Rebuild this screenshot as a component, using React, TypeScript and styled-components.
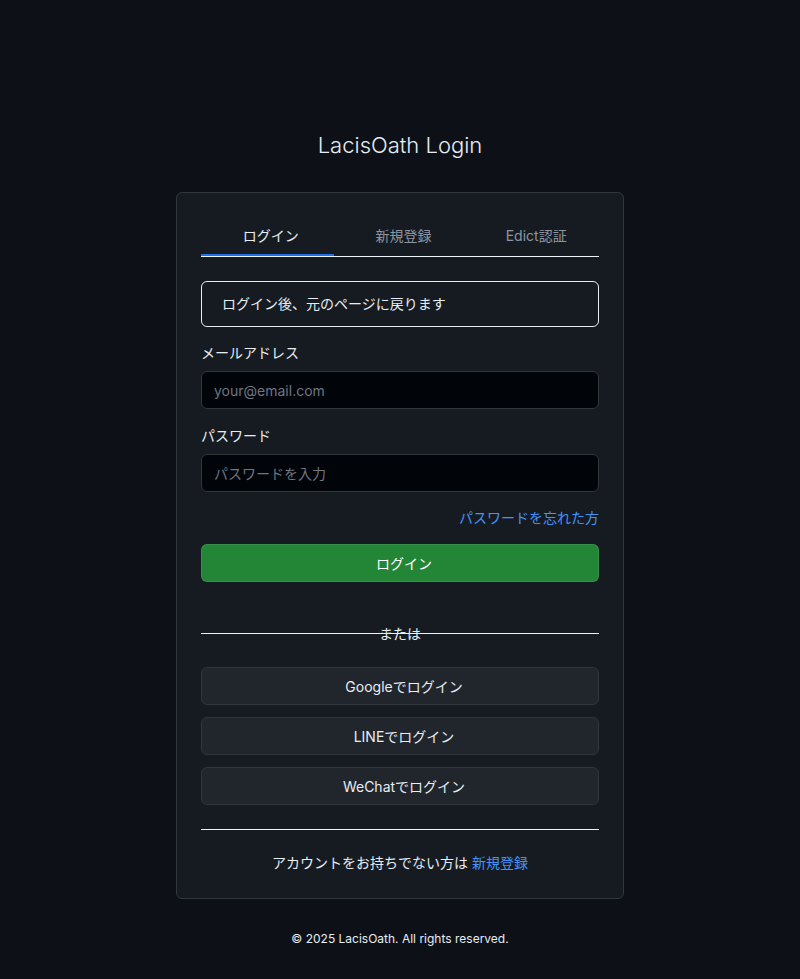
import React, { useState } from "react";
import styled, { createGlobalStyle } from "styled-components";

const Global = createGlobalStyle`
  html, body { margin: 0; padding: 0; background: #0d1117; }
  body {
    font-family: Inter, "Noto Sans CJK JP", sans-serif;
    color: #e6edf3;
    -webkit-font-smoothing: antialiased;
  }
  * { box-sizing: border-box; }
`;

const Page = styled.main`
  min-height: 979px;
  display: flex;
  flex-direction: column;
  align-items: center;
  padding-top: 130px;
`;

const Title = styled.h1`
  margin: 0 0 32px;
  font-size: 22px;
  line-height: 30px;
  font-weight: 300;
  color: #e6edf3;
`;

const Card = styled.section`
  width: 448px;
  background: #161b22;
  border: 1px solid #30363d;
  border-radius: 6px;
  padding: 24px 24px 25px;
`;

const Tabs = styled.div`
  display: grid;
  grid-template-columns: repeat(3, 1fr);
  border-bottom: 1px solid #f0f3f6;
  margin-bottom: 24px;
`;

const Tab = styled.button<{ $active?: boolean }>`
  height: 39px;
  background: none;
  border: none;
  border-bottom: 2px solid ${(p) => (p.$active ? "#1f6feb" : "transparent")};
  color: ${(p) => (p.$active ? "#e6edf3" : "#8d96a0")};
  font-family: inherit;
  font-size: 14px;
  padding: 0 0 2px 7px;
  cursor: pointer;
`;

const Notice = styled.div`
  border: 1px solid #e6edf3;
  border-radius: 6px;
  padding: 12px 20px;
  font-size: 14px;
  line-height: 20px;
  color: #e6edf3;
  margin-bottom: 15px;
`;

const Field = styled.div`
  display: flex;
  flex-direction: column;
  margin-bottom: 16px;
`;

const Label = styled.label`
  font-size: 14px;
  line-height: 21px;
  color: #e6edf3;
  margin-bottom: 8px;
`;

const Input = styled.input`
  height: 38px;
  background: #010409;
  border: 1px solid #30363d;
  border-radius: 6px;
  padding: 0 12px;
  color: #e6edf3;
  font-family: inherit;
  font-size: 14px;
  outline: none;
  &::placeholder { color: #6e7681; }
`;

const ForgotRow = styled.div`
  display: flex;
  justify-content: flex-end;
  margin: 1px 0 16px;
`;

const Link = styled.a`
  color: #4493f8;
  font-size: 14px;
  line-height: 20px;
  text-decoration: none;
`;

const PrimaryButton = styled.button`
  width: 100%;
  height: 38px;
  background: #238636;
  border: 1px solid rgba(240, 246, 252, 0.1);
  border-radius: 6px;
  color: #ffffff;
  font-family: inherit;
  font-size: 14px;
  padding: 0 0 0 8px;
  cursor: pointer;
`;

const Divider = styled.div`
  position: relative;
  margin: 51px 0 33px;
  height: 1px;
  background: #f0f3f6;
  display: flex;
  justify-content: center;
  align-items: center;
`;

const DividerText = styled.span`
  font-size: 14px;
  line-height: 20px;
  color: #e6edf3;
  position: absolute;
`;

const SocialList = styled.div`
  display: flex;
  flex-direction: column;
  gap: 12px;
`;

const SocialButton = styled.button`
  height: 38px;
  background: #21262d;
  border: 1px solid #30363d;
  border-radius: 6px;
  color: #e6edf3;
  font-family: inherit;
  font-size: 14px;
  padding: 0 0 0 8px;
  cursor: pointer;
`;

const Rule = styled.hr`
  border: none;
  height: 1px;
  background: #f0f3f6;
  margin: 24px 0 23px;
`;

const SignupText = styled.p`
  margin: 0;
  text-align: center;
  font-size: 14px;
  line-height: 20px;
  color: #e6edf3;
`;

const Copyright = styled.footer`
  margin-top: 31px;
  font-size: 12px;
  line-height: 18px;
  color: #e6edf3;
`;

export default function App() {
  const [tab, setTab] = useState(0);
  const tabs = ["ログイン", "新規登録", "Edict認証"];
  return (
    <>
      <Global />
      <Page>
        <Title>LacisOath Login</Title>
        <Card>
          <Tabs>
            {tabs.map((t, i) => (
              <Tab key={t} $active={tab === i} onClick={() => setTab(i)}>
                {t}
              </Tab>
            ))}
          </Tabs>
          <Notice>ログイン後、元のページに戻ります</Notice>
          <Field>
            <Label>メールアドレス</Label>
            <Input type="email" placeholder="your@email.com" />
          </Field>
          <Field>
            <Label>パスワード</Label>
            <Input type="password" placeholder="パスワードを入力" />
          </Field>
          <ForgotRow>
            <Link href="#">パスワードを忘れた方</Link>
          </ForgotRow>
          <PrimaryButton>ログイン</PrimaryButton>
          <Divider>
            <DividerText>または</DividerText>
          </Divider>
          <SocialList>
            <SocialButton>Googleでログイン</SocialButton>
            <SocialButton>LINEでログイン</SocialButton>
            <SocialButton>WeChatでログイン</SocialButton>
          </SocialList>
          <Rule />
          <SignupText>
            アカウントをお持ちでない方は <Link href="#">新規登録</Link>
          </SignupText>
        </Card>
        <Copyright>© 2025 LacisOath. All rights reserved.</Copyright>
      </Page>
    </>
  );
}
